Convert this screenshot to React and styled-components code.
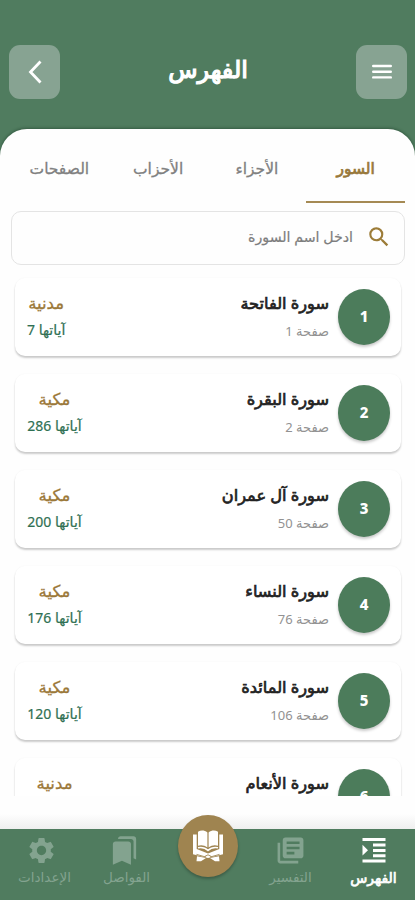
import React from "react";
import styled, { createGlobalStyle, css } from "styled-components";
import {
  MdSearch,
  MdSettings,
  MdBookmarks,
  MdLibraryBooks,
} from "react-icons/md";

const Global = createGlobalStyle`
  *, *::before, *::after { box-sizing: border-box; }
  body { margin: 0; background: #fff; font-family: "Noto Sans", "DejaVu Sans", sans-serif; }
  button { font: inherit; border: 0; background: none; padding: 0; margin: 0; }
`;

const heavy = css`
  font-weight: 400;
  -webkit-text-stroke: 0.7px currentColor;
`;

const Screen = styled.div`
  width: 415px;
  height: 900px;
  display: flex;
  flex-direction: column;
  overflow: hidden;
  background: #507c5f;
`;

const Header = styled.header`
  height: 129px;
  flex: none;
  display: flex;
  justify-content: space-between;
  align-items: flex-start;
  padding: 45px 8px 0 9px;
`;

const HeaderButton = styled.button`
  width: 51px;
  height: 54px;
  border-radius: 11px;
  background: #87a392;
  color: #fff;
  display: grid;
  place-items: center;
`;

const Title = styled.h1`
  margin: 0;
  color: #fff;
  font-size: 24px;
  line-height: 47px;
  ${heavy}
  -webkit-text-stroke-width: 1.2px;
`;

const Sheet = styled.main`
  flex: 1;
  min-height: 0;
  display: flex;
  flex-direction: column;
  background: #fefefe;
  border-radius: 27px 27px 0 0;
  box-shadow: 0 -1px 3px rgba(20, 50, 30, 0.45);
`;

const Tabs = styled.div`
  display: grid;
  grid-template-columns: repeat(4, 1fr);
  margin: 0 10px;
  height: 74px;
  flex: none;
`;

const Tab = styled.button`
  font-size: 15.5px;
  line-height: 24px;
  padding: 6px 0 0;
  color: #808080;
  -webkit-text-stroke: 0.3px currentColor;
  border-bottom: 2px solid transparent;
  ${(p) =>
    p.$active &&
    css`
      ${heavy}
      color: #98783a;
      border-bottom-color: #a58a54;
    `}
`;

const SearchField = styled.label`
  height: 54px;
  flex: none;
  margin: 8px 10px 0 11px;
  border: 1.5px solid #e4e4e4;
  border-radius: 10px;
  display: flex;
  align-items: center;
  gap: 13px;
  padding: 0 12px 2px;
  color: #9c7c38;
`;

const Placeholder = styled.span`
  color: #7d7d7d;
  font-size: 14.2px;
  line-height: 20px;
  -webkit-text-stroke: 0.2px currentColor;
`;

const List = styled.div`
  height: 531px;
  flex: none;
  overflow: hidden;
  display: flex;
  flex-direction: column;
  gap: 18px;
  padding: 13px 14px 0 15px;
`;

const Card = styled.article`
  height: 78px;
  flex: none;
  display: flex;
  align-items: flex-start;
  padding: 11px 11px 0 12px;
  border-radius: 10px;
  background: #fff;
  box-shadow: 0 2px 2px rgba(0, 0, 0, 0.2), 0 0 2px rgba(0, 0, 0, 0.04);
`;

const NumberBadge = styled.div`
  width: 52px;
  height: 56px;
  border-radius: 50%;
  background: #4c7c5b;
  color: #fff;
  font-size: 15px;
  font-weight: 800;
  display: grid;
  place-items: center;
  padding-bottom: 2px;
  box-shadow: 0 2px 3px rgba(0, 0, 0, 0.22);
`;

const SurahText = styled.div`
  flex: 1;
  padding: 1px 9px 0 0;
  display: flex;
  flex-direction: column;
  gap: 3px;
`;

const SurahName = styled.h2`
  margin: 0;
  font-size: 16.2px;
  line-height: 26px;
  color: #222;
  ${heavy}
`;

const PageLine = styled.span`
  font-size: 13px;
  line-height: 24px;
  color: #929292;
`;

const Meta = styled.div`
  min-width: ${(p) => (p.$wide ? "55px" : "0")};
  padding-top: 1px;
  display: flex;
  flex-direction: column;
  align-items: center;
  gap: 2px;
`;

const Origin = styled.span`
  font-size: 16.5px;
  line-height: 26px;
  color: #9b7838;
  -webkit-text-stroke: 0.3px currentColor;
`;

const Verses = styled.span`
  font-size: 14px;
  line-height: 24px;
  color: #2f7053;
  -webkit-text-stroke: 0.2px currentColor;
`;

const BottomArea = styled.footer`
  flex: none;
  height: 104px;
  display: flex;
  flex-direction: column;
  justify-content: flex-end;
  background: linear-gradient(#fefefe 0, #fefefe 18px, #efefef 33px);
`;

const NavBar = styled.nav`
  height: 71px;
  display: grid;
  grid-template-columns: repeat(5, 83px);
  background: #507c5f;
`;

const NavItem = styled.button`
  display: flex;
  flex-direction: column;
  align-items: center;
  padding-top: 6px;
  color: #83a38f;
  font-size: 13.5px;
  line-height: 23px;
  ${(p) =>
    p.$active &&
    css`
      ${heavy}
      color: #fff;
      font-size: 14px;
    `}
`;

const NavLabel = styled.span`
  padding-left: ${(p) => p.$shift || 0}px;
`;

const CenterButton = styled.button`
  width: 60px;
  height: 62px;
  margin: -14px auto 0;
  border-radius: 50%;
  background: #9f8450;
  display: grid;
  place-items: center;
  box-shadow: 0 2px 3px rgba(0, 0, 0, 0.25);
`;

const surahs = [
  { n: 1, name: "سورة الفاتحة", page: 1, origin: "مدنية", verses: 7 },
  { n: 2, name: "سورة البقرة", page: 2, origin: "مكية", verses: 286 },
  { n: 3, name: "سورة آل عمران", page: 50, origin: "مكية", verses: 200 },
  { n: 4, name: "سورة النساء", page: 76, origin: "مكية", verses: 176 },
  { n: 5, name: "سورة المائدة", page: 106, origin: "مكية", verses: 120 },
  { n: 6, name: "سورة الأنعام", origin: "مدنية" },
];

function MenuIcon() {
  return (
    <svg width="20" height="16" viewBox="0 0 20 16" stroke="#fff" strokeWidth="2.4" strokeLinecap="round">
      <path d="M1.200 2H18.800M1.200 7.700H18.800M1.200 13.400H18.800" />
    </svg>
  );
}

function ChevronIcon() {
  return (
    <svg width="14" height="24" viewBox="0 0 14 24" fill="none" stroke="#fff" strokeWidth="2.8">
      <path d="M12.500 1.500L2.500 12L12.500 22.500" />
    </svg>
  );
}

function IndexIcon() {
  return (
    <svg width="24" height="31" viewBox="0 0 24 31" fill="currentColor" stroke="none">
      <path d="M0.500 3H23.500V6H0.500ZM11 8.500H23.500V11.500H11ZM11 14H23.500V17H11ZM11 19.200H23.500V22.200H11ZM0.500 24.500H23.500V27.500H0.500ZM0.500 9.800L6 15.200L0.500 20.600Z" />
    </svg>
  );
}

function QuranStandIcon() {
  return (
    <svg width="32" height="34" viewBox="0 0 32 34" fill="#fff">
      <path d="M1 5.500H4.700V20L16 24.500L27.300 20V5.500H31V25.200L16 29L1 25.200Z" />
      <path d="M6 2.800C9 1 12.500 1.200 15.400 3.500V18.500C12.500 16.200 9 15.800 6 16.800ZM26 2.800C23 1 19.500 1.200 16.600 3.500V18.500C19.500 16.200 23 15.800 26 16.800Z" />
      <path d="M6 18.800C10 18 13.500 19 16 21.500C18.500 19 22 18 26 18.800" fill="none" stroke="#fff" strokeWidth="1.400" />
      <path d="M5 27.200L14 29L9 32.300H4.500ZM27 27.200L18 29L23 32.300H27.500Z" />
      <path d="M4.500 25.400L14 28.100M27.500 25.400L18 28.100M12.500 27.600L16 25.800L19.500 27.600" fill="none" stroke="#9f8450" strokeWidth="0.900" />
    </svg>
  );
}

export default function App() {
  return (
    <Screen dir="rtl" lang="ar">
      <Global />
      <Header>
        <HeaderButton aria-label="القائمة">
          <MenuIcon />
        </HeaderButton>
        <Title>الفهرس</Title>
        <HeaderButton aria-label="رجوع">
          <ChevronIcon />
        </HeaderButton>
      </Header>
      <Sheet>
        <Tabs>
          <Tab $active>السور</Tab>
          <Tab>الأجزاء</Tab>
          <Tab>الأحزاب</Tab>
          <Tab>الصفحات</Tab>
        </Tabs>
        <SearchField>
          <MdSearch size={26} />
          <Placeholder>ادخل اسم السورة</Placeholder>
        </SearchField>
        <List>
          {surahs.map((s) => (
            <Card key={s.n}>
              <NumberBadge>{s.n}</NumberBadge>
              <SurahText>
                <SurahName>{s.name}</SurahName>
                {s.page && <PageLine>صفحة {s.page}</PageLine>}
              </SurahText>
              <Meta $wide={s.n > 1}>
                <Origin>{s.origin}</Origin>
                {s.verses && <Verses>آياتها {s.verses}</Verses>}
              </Meta>
            </Card>
          ))}
        </List>
      </Sheet>
      <BottomArea>
        <NavBar>
          <NavItem $active>
            <IndexIcon />
            <NavLabel>الفهرس</NavLabel>
          </NavItem>
          <NavItem>
            <MdLibraryBooks size={31} />
            <NavLabel>التفسير</NavLabel>
          </NavItem>
          <CenterButton aria-label="المصحف">
            <QuranStandIcon />
          </CenterButton>
          <NavItem>
            <MdBookmarks size={31} />
            <NavLabel $shift={4}>الفواصل</NavLabel>
          </NavItem>
          <NavItem>
            <MdSettings size={31} />
            <NavLabel $shift={6}>الإعدادات</NavLabel>
          </NavItem>
        </NavBar>
      </BottomArea>
    </Screen>
  );
}
